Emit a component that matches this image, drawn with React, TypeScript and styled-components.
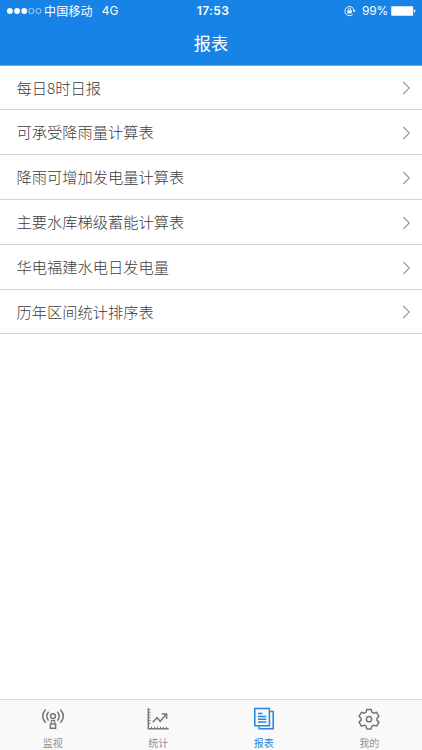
import React from 'react';
import styled, { createGlobalStyle } from 'styled-components';

const GlobalStyle = createGlobalStyle`
  * { box-sizing: border-box; }
  body {
    margin: 0;
    background: #fff;
    font-family: Inter, "Noto Sans CJK SC", sans-serif;
  }
`;

const Screen = styled.div`
  width: 422px;
  height: 750px;
  display: flex;
  flex-direction: column;
  overflow: hidden;
`;

const Header = styled.header`
  flex: none;
  height: 66px;
  background: #1783e6;
  border-bottom: 1px solid #5ba8ee;
  color: #fff;
`;

const StatusBar = styled.div`
  height: 22px;
  display: grid;
  grid-template-columns: 1fr auto 1fr;
  align-items: center;
  padding: 0 6px 0 7px;
  font-size: 12px;
  line-height: 22px;
`;

const StatusGroup = styled.div<{ $end?: boolean }>`
  display: flex;
  align-items: center;
  height: 22px;
  justify-content: ${(p) => (p.$end ? 'flex-end' : 'flex-start')};
`;

const Carrier = styled.span`
  margin-left: 2px;
  padding-top: 1px;
  letter-spacing: 0.2px;
`;

const Network = styled.span`
  margin-left: 9px;
  font-size: 11.8px;
`;

const Clock = styled.span`
  padding-left: 3px;
  font-size: 12px;
  font-weight: 600;
  letter-spacing: 0.4px;
`;

const Percent = styled.span`
  margin: 0 3px 0 6px;
  font-size: 12px;
  letter-spacing: -0.2px;
`;

const Title = styled.h1`
  margin: 0;
  height: 43px;
  line-height: 43px;
  text-align: center;
  font-size: 17.2px;
  font-weight: 400;
`;

const List = styled.main`
  flex: 1;
`;

const Row = styled.div`
  height: 45px;
  display: flex;
  align-items: center;
  justify-content: space-between;
  padding: 1px 11px 0 16.5px;
  border-bottom: 1px solid #d3d3d3;
  color: #3c3c3c;

  &:first-child,
  &:last-child {
    height: 44px;
  }
`;

const RowLabel = styled.span`
  margin-bottom: 3px;
  font-family: "Noto Sans CJK SC", sans-serif;
  font-size: 15.25px;
  font-weight: 300;
  line-height: 22px;
`;

const TabBar = styled.nav`
  flex: none;
  height: 51px;
  display: grid;
  grid-template-columns: repeat(4, 1fr);
  background: #f9f9f9;
  border-top: 1px solid #d8d8d8;
`;

const Tab = styled.div<{ $active?: boolean }>`
  display: flex;
  flex-direction: column;
  align-items: center;
  padding-top: 7px;
  color: ${(p) => (p.$active ? '#2784df' : '#777')};
`;

const TabLabel = styled.span<{ $active?: boolean }>`
  margin-top: 5px;
  font-size: 10px;
  line-height: 14px;
  color: ${(p) => (p.$active ? '#2784df' : '#929292')};
`;

const Icon = styled.svg`
  display: block;
  flex: none;
  fill: none;
  stroke: currentColor;
  stroke-width: 1.5;
`;

const SignalDots = () => (
  <Icon width="35" height="8" viewBox="0 0 35 8">
    {[0, 1, 2, 3, 4].map((i) => (
      <circle
        key={i}
        cx={2.9 + i * 7.15}
        cy="4"
        r={i < 3 ? 2.9 : 2.6}
        fill={i < 3 ? '#fff' : 'none'}
        strokeWidth={i < 3 ? 0 : 0.6}
      />
    ))}
  </Icon>
);

const RotationLock = () => (
  <Icon width="12" height="12" viewBox="0 0 12 12">
    <path d="M8.8 9.4A4.6 4.6 0 1 1 10.1 5.4" strokeWidth="0.9" />
    <path d="M8.5 5.2h3.2l-1.6 2z" fill="currentColor" stroke="none" />
    <rect x="3.5" y="5.3" width="4.2" height="3.1" fill="currentColor" stroke="none" />
    <path d="M4.3 5.5V4.6a1.3 1.3 0 0 1 2.6 0v.9" strokeWidth="0.8" />
  </Icon>
);

const Battery = () => (
  <Icon width="25" height="10" viewBox="0 0 25 10">
    <rect x="0.2" y="0.2" width="22" height="9.6" rx="0.7" fill="#fff" stroke="none" />
    <path d="M23 3.4q1.4.2 1.4 1.6T23 6.6z" fill="#fff" stroke="none" />
  </Icon>
);

const Chevron = () => (
  <Icon width="9" height="14" viewBox="0 0 9 14">
    <path d="M1.3 1 7.3 7l-6 6" stroke="#999" strokeWidth="1.1" />
  </Icon>
);

const MonitorIcon = () => (
  <Icon width="24" height="24" viewBox="0 0 24 24">
    <path d="M4.6 2.6Q-1.2 9.2 4.6 15.8M19.4 2.6q5.8 6.6 0 13.2" />
    <path d="M7.6 4.8Q4 9.2 7.6 13.6M16.4 4.8q3.6 4.4 0 8.8" />
    <circle cx="12" cy="9.2" r="2.4" />
    <path d="M10.3 13.2v3.4M13.7 13.2v3.4M10.1 13.7h3.8" strokeWidth="1.2" />
    <rect x="9.4" y="17" width="5.2" height="4.3" />
  </Icon>
);

const ChartIcon = () => (
  <Icon width="24" height="24" viewBox="0 0 24 24">
    <path d="M2.3 1.2v20.5h20.3" />
    <path d="M2.4 2.4h2.1M2.4 5.2h2.1M2.4 8h2.1M2.4 10.8h2.1M2.4 13.6h2.1M2.4 16.4h2.1M5.5 21.5v-1.8M8.5 21.5v-1.8M11.5 21.5v-1.8M14.5 21.5v-1.8M17.5 21.5v-1.8M20.5 21.5v-1.8" strokeWidth="1" />
    <path d="M6.7 15.2 11 10.7l3.2 3.6 6.2-7M15.7 7h4.9v5" />
  </Icon>
);

const ReportIcon = () => (
  <Icon width="24" height="24" viewBox="0 0 24 24">
    <path d="M2.8 1.5h14.6v17.3H2.8z" />
    <path d="M18.4 4.5h2.8v17.2H7.1v-2.5" />
    <path d="M6 6.6h4.5M6 9.4h8.3M6 12.2h8.3M6 15h8.3" />
  </Icon>
);

const GearIcon = () => (
  <Icon width="24" height="24" viewBox="0 0 24 24">
    <path
      d="M9.8 2.4h4.4l.7 2.8 1.8 1 2.9-.9 2.4 4-2.1 2v1.8l2.1 2-2.4 4-2.9-.9-1.8 1-.7 2.7H9.8l-.7-2.7-1.8-1-2.9.9-2.4-4 2.1-2v-1.8l-2.1-2 2.4-4 2.9.9 1.8-1z"
      strokeLinejoin="round"
    />
    <circle cx="12" cy="12.2" r="2.6" />
  </Icon>
);

const reports = [
  '每日8时日报',
  '可承受降雨量计算表',
  '降雨可增加发电量计算表',
  '主要水库梯级蓄能计算表',
  '华电福建水电日发电量',
  '历年区间统计排序表',
];

const tabs = [
  { label: '监视', Glyph: MonitorIcon },
  { label: '统计', Glyph: ChartIcon },
  { label: '报表', Glyph: ReportIcon, active: true },
  { label: '我的', Glyph: GearIcon },
];

export default function App() {
  return (
    <Screen>
      <GlobalStyle />
      <Header>
        <StatusBar>
          <StatusGroup>
            <SignalDots />
            <Carrier>中国移动</Carrier>
            <Network>4G</Network>
          </StatusGroup>
          <Clock>17:53</Clock>
          <StatusGroup $end>
            <RotationLock />
            <Percent>99%</Percent>
            <Battery />
          </StatusGroup>
        </StatusBar>
        <Title>报表</Title>
      </Header>
      <List>
        {reports.map((name) => (
          <Row key={name}>
            <RowLabel>{name}</RowLabel>
            <Chevron />
          </Row>
        ))}
      </List>
      <TabBar>
        {tabs.map(({ label, Glyph, active }) => (
          <Tab key={label} $active={active}>
            <Glyph />
            <TabLabel $active={active}>{label}</TabLabel>
          </Tab>
        ))}
      </TabBar>
    </Screen>
  );
}
